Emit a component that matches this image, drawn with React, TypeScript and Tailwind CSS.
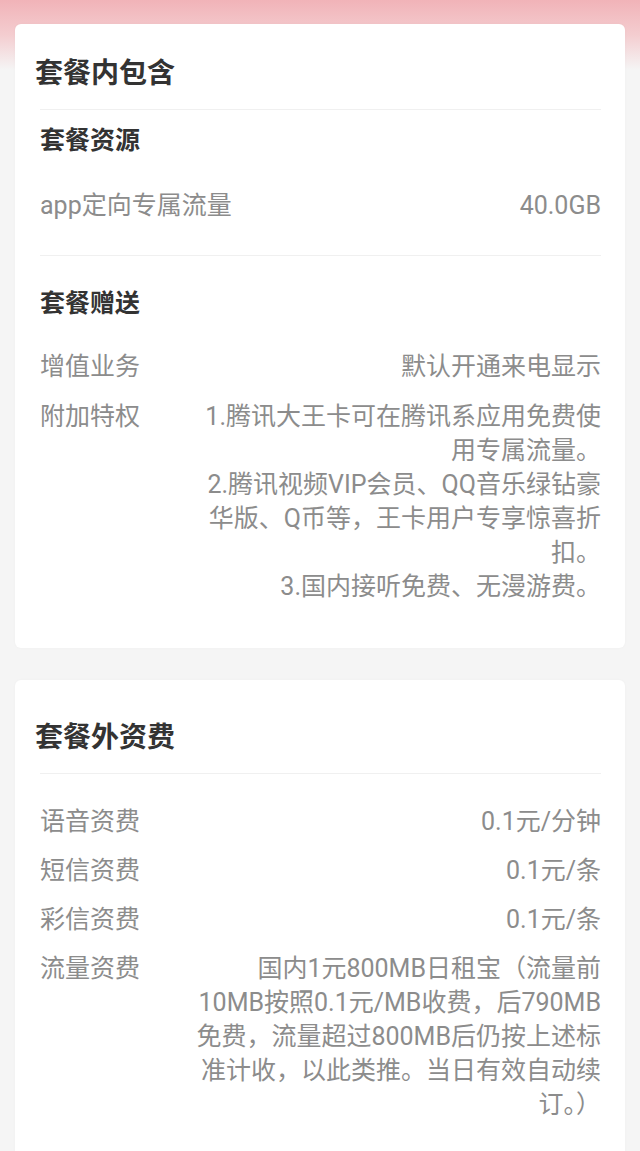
import React from "react";

type Row = { label: string; value: string[] };

const FONT = "[font-family:Roboto,'Noto_Sans_CJK_SC',sans-serif]";

const EXTRA_ROWS: Row[] = [
  { label: "语音资费", value: ["0.1元/分钟"] },
  { label: "短信资费", value: ["0.1元/条"] },
  { label: "彩信资费", value: ["0.1元/条"] },
  {
    label: "流量资费",
    value: [
      "国内1元800MB日租宝（流量前10MB按照0.1元/MB收费，后790MB免费，流量超过800MB后仍按上述标准计收，以此类推。当日有效自动续订。）",
    ],
  },
];

export default function App() {
  return (
    <main
      className={`min-h-[1151px] bg-[linear-gradient(to_bottom,#f1b3b8_0px,#f4cdd0_35px,#f5f5f5_70px,#f5f5f5_100%)] px-[15px] pt-[24px] ${FONT}`}
    >
      <section className="rounded-[6px] bg-white px-5 pt-[32px] pb-[44px] shadow-[0_0_3px_rgba(0,0,0,0.03)]">
        <h2 className="text-[28px] font-bold leading-[36px] text-[#333]">套餐内包含</h2>
        <div className="mt-[17px] pl-[5px] pr-[4px]">
          <div className="h-px bg-[#f0f0f0]" />
          <h3 className="pt-[14px] text-[25px] font-bold leading-[34px] text-[#333]">套餐资源</h3>
          <InfoRow row={{ label: "app定向专属流量", value: ["40.0GB"] }} className="mt-[31px]" />
          <div className="mt-[32px] h-px bg-[#f0f0f0]" />
          <h3 className="pt-[31px] text-[25px] font-bold leading-[34px] text-[#333]">套餐赠送</h3>
          <InfoRow row={{ label: "增值业务", value: ["默认开通来电显示"] }} className="mt-[29px]" />
          <InfoRow
            row={{
              label: "附加特权",
              value: [
                "1.腾讯大王卡可在腾讯系应用免费使用专属流量。",
                "2.腾讯视频VIP会员、QQ音乐绿钻豪华版、Q币等，王卡用户专享惊喜折扣。",
                "3.国内接听免费、无漫游费。",
              ],
            }}
            className="mt-[16px]"
          />
        </div>
      </section>

      <section className="mt-[32px] rounded-[6px] bg-white px-5 pt-[40px] pb-[46px] shadow-[0_0_3px_rgba(0,0,0,0.03)]">
        <h2 className="text-[28px] font-bold leading-[36px] text-[#333]">套餐外资费</h2>
        <div className="mt-[17px] pl-[5px] pr-[4px]">
          <div className="h-px bg-[#f0f0f0]" />
          <div className="flex flex-col gap-[15px] pt-[31px]">
            {EXTRA_ROWS.map((row) => (
              <InfoRow key={row.label} row={row} />
            ))}
          </div>
        </div>
      </section>
    </main>
  );
}

function InfoRow({ row, className = "" }: { row: Row; className?: string }) {
  return (
    <div className={`flex items-start text-[25px] leading-[34px] text-[#8c8c8c] ${className}`}>
      <span className="w-[156px] shrink-0 whitespace-nowrap">{row.label}</span>
      <div className="flex-1 text-right">
        {row.value.map((line) => (
          <p key={line}>{line}</p>
        ))}
      </div>
    </div>
  );
}
